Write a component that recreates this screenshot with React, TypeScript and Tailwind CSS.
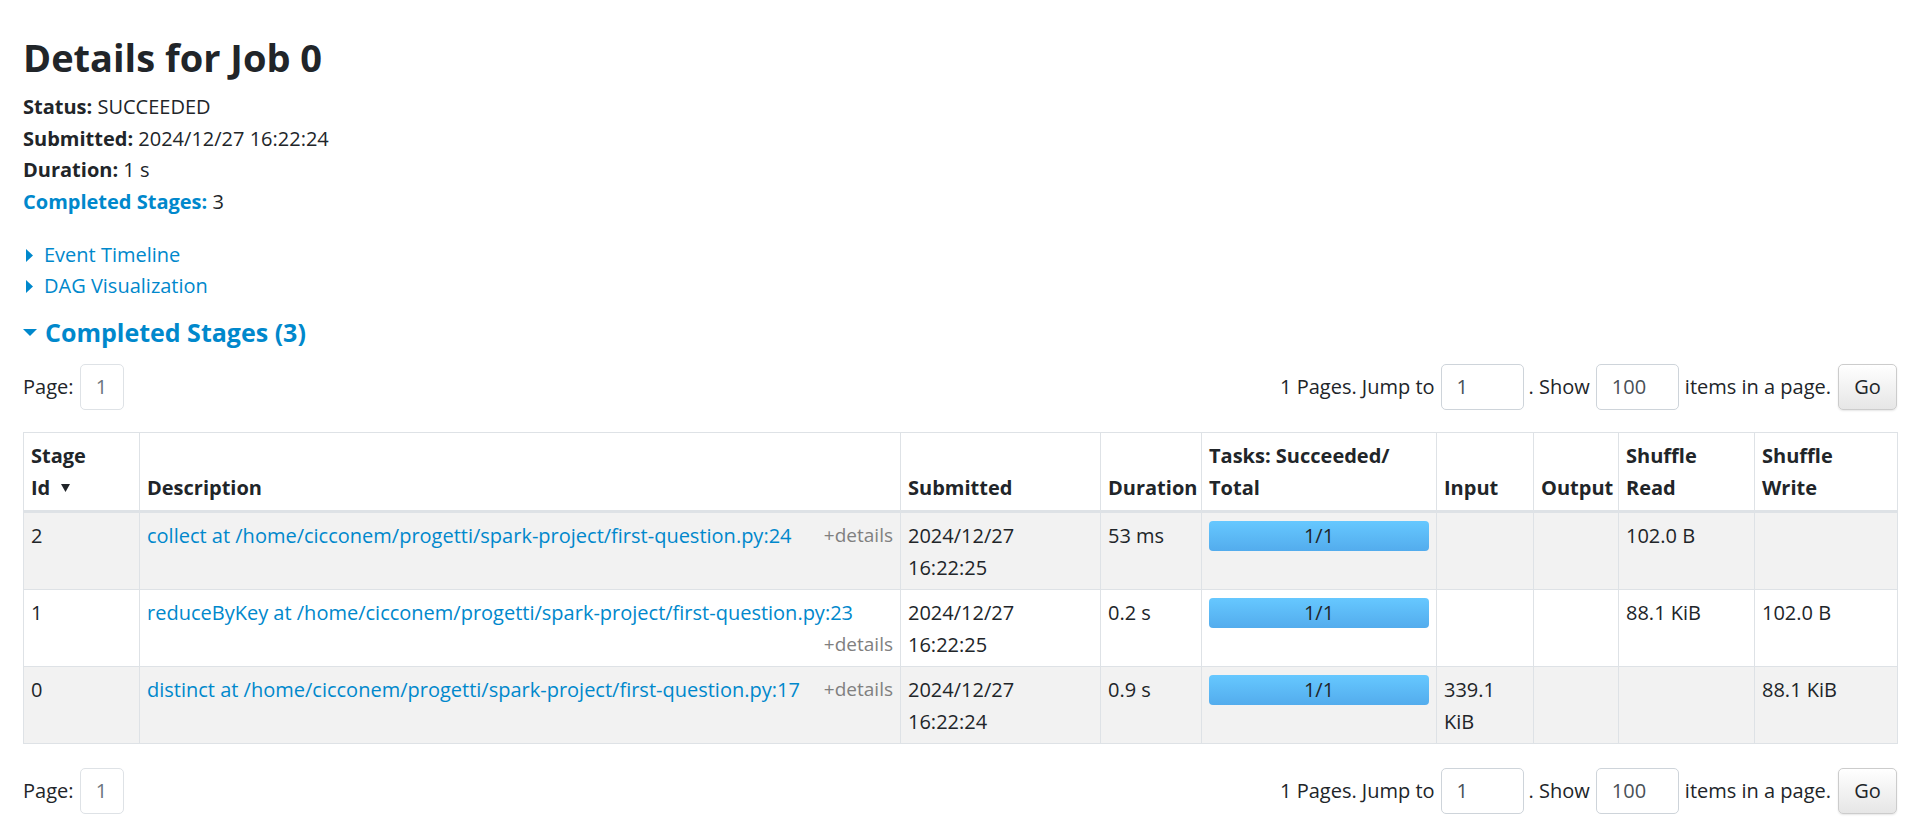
import React from "react";

const font = { fontFamily: '"Open Sans", "Noto Sans", sans-serif' };

const RightTri = () => (
  <svg width="7" height="13" viewBox="0 0 7 13" className="inline-block mr-[11px] -mt-[3px] fill-[#0088cc]">
    <path d="M0 0 L7 6.5 L0 13 Z" />
  </svg>
);

const DownTri = () => (
  <svg width="14" height="8" viewBox="0 0 14 8" className="inline-block mr-[8px] -mt-[4px] fill-[#0088cc]">
    <path d="M0 0 L14 0 L7 7 Z" />
  </svg>
);

const SortArrow = () => (
  <svg width="9" height="8" viewBox="0 0 9 8" className="inline-block ml-[11px] -mt-[3px] fill-[#212529]">
    <path d="M0 0 L9 0 L4.5 8 Z" />
  </svg>
);

const Pager = () => (
  <div className="flex items-center justify-between h-[46px]">
    <div className="flex items-center">
      <span>Page:</span>
      <span className="ml-[6px] w-[44px] h-[46px] flex items-center justify-center border border-[#dee2e6] rounded-[5px] text-[#6c757d]">
        1
      </span>
    </div>
    <div className="flex items-center">
      <span>1 Pages. Jump to</span>
      <span className="ml-[6px] w-[83px] h-[46px] flex items-center pl-[15px] border border-[#ced4da] rounded-[5px] text-[#495057]">
        1
      </span>
      <span className="ml-[5px]">. Show</span>
      <span className="ml-[6px] w-[83px] h-[46px] flex items-center pl-[15px] border border-[#ced4da] rounded-[5px] text-[#495057]">
        100
      </span>
      <span className="ml-[6px]">items in a page.</span>
      <span className="ml-[7px] w-[59px] h-[46px] flex items-center justify-center border border-[#ccc] rounded-[5px] bg-gradient-to-b from-white to-[#e6e6e6] shadow-[0_1px_2px_rgba(0,0,0,0.1)]">
        Go
      </span>
    </div>
  </div>
);

type Row = {
  id: string;
  desc: string;
  wrapDetails?: boolean;
  time: string;
  dur: string;
  input: React.ReactNode;
  read: string;
  write: string;
};

const rows: Row[] = [
  {
    id: "2",
    desc: "collect at /home/cicconem/progetti/spark-project/first-question.py:24",
    time: "16:22:25",
    dur: "53 ms",
    input: "",
    read: "102.0 B",
    write: "",
  },
  {
    id: "1",
    desc: "reduceByKey at /home/cicconem/progetti/spark-project/first-question.py:23",
    wrapDetails: true,
    time: "16:22:25",
    dur: "0.2 s",
    input: "",
    read: "88.1 KiB",
    write: "102.0 B",
  },
  {
    id: "0",
    desc: "distinct at /home/cicconem/progetti/spark-project/first-question.py:17",
    time: "16:22:24",
    dur: "0.9 s",
    input: (
      <>
        339.1
        <br />
        KiB
      </>
    ),
    read: "",
    write: "88.1 KiB",
  },
];

const th = "border border-[#dee2e6] border-b-[3px] px-[7px] pt-[7px] pb-[7px] text-left align-bottom font-bold";
const td = "border border-[#dee2e6] px-[7px] pt-[7px] pb-[6px] align-top";

export default function App() {
  return (
    <div style={font} className="min-h-screen bg-white text-[#212529] text-[20px] leading-[31.5px] pl-[23px] pr-[15px] pt-[35px]">
      <h3 className="text-[38px] leading-[44px] font-bold">Details for Job 0</h3>

      <ul className="mt-[12px]">
        <li>
          <strong>Status:</strong> SUCCEEDED
        </li>
        <li>
          <strong>Submitted:</strong> 2024/12/27 16:22:24
        </li>
        <li>
          <strong>Duration:</strong> 1 s
        </li>
        <li>
          <strong className="text-[#0088cc]">Completed Stages:</strong> 3
        </li>
      </ul>

      <div className="mt-[22px] text-[#0088cc] leading-[31px]">
        <div className="pl-[3px]">
          <RightTri />
          Event Timeline
        </div>
        <div className="pl-[3px]">
          <RightTri />
          DAG Visualization
        </div>
      </div>

      <h4 className="mt-[16px] text-[25px] leading-[31px] font-bold text-[#0088cc]">
        <DownTri />
        Completed Stages (3)
      </h4>

      <div className="mt-[16px]">
        <Pager />
      </div>

      <table className="mt-[22px] w-full table-fixed border-collapse">
        <thead>
          <tr>
            <th className={th + " w-[116px]"}>
              Stage
              <br />
              Id
              <SortArrow />
            </th>
            <th className={th + " w-[761px]"}>Description</th>
            <th className={th + " w-[200px]"}>Submitted</th>
            <th className={th + " w-[101px]"}>Duration</th>
            <th className={th + " w-[235px]"}>
              Tasks: Succeeded/
              <br />
              Total
            </th>
            <th className={th + " w-[97px]"}>Input</th>
            <th className={th + " w-[85px]"}>Output</th>
            <th className={th + " w-[136px]"}>
              Shuffle
              <br />
              Read
            </th>
            <th className={th + " w-[143px]"}>
              Shuffle
              <br />
              Write
            </th>
          </tr>
        </thead>
        <tbody>
          {rows.map((r, i) => (
            <tr key={r.id} className={i % 2 === 0 ? "bg-[#f2f2f2]" : "bg-white"}>
              <td className={td}>{r.id}</td>
              <td className={td}>
                {r.wrapDetails ? (
                  <>
                    <div className="text-[#0088cc]">{r.desc}</div>
                    <div className="text-right text-[19px] text-[#808080]">+details</div>
                  </>
                ) : (
                  <div className="flex justify-between">
                    <span className="text-[#0088cc]">{r.desc}</span>
                    <span className="text-[19px] text-[#808080]">+details</span>
                  </div>
                )}
              </td>
              <td className={td}>
                2024/12/27
                <br />
                {r.time}
              </td>
              <td className={td}>{r.dur}</td>
              <td className={td}>
                <div className="h-[30px] mt-[1px] rounded-[4px] bg-gradient-to-b from-[#66c8ff] to-[#53aced] flex items-center justify-center leading-none">
                  1/1
                </div>
              </td>
              <td className={td}>{r.input}</td>
              <td className={td}></td>
              <td className={td}>{r.read}</td>
              <td className={td}>{r.write}</td>
            </tr>
          ))}
        </tbody>
      </table>

      <div className="mt-[24px]">
        <Pager />
      </div>
    </div>
  );
}
